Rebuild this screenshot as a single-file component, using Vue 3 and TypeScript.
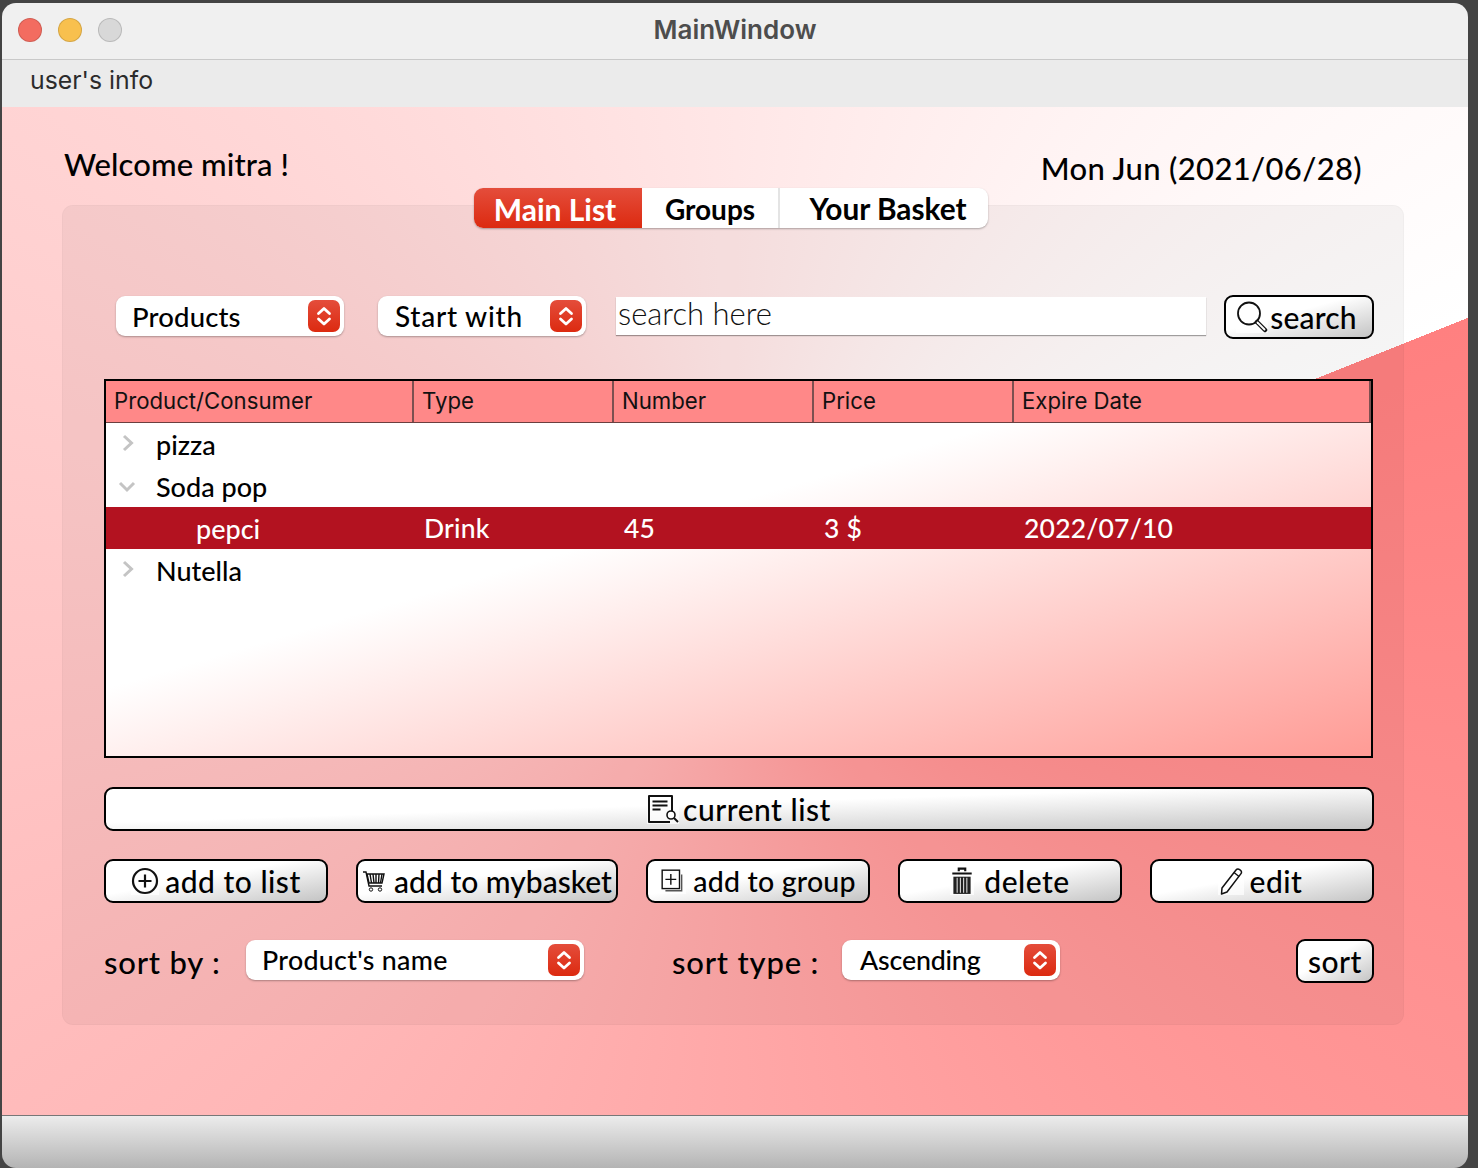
<script setup lang="ts">
interface Column { label: string }
interface TreeRow { name: string; level: number; arrow: '' | 'right' | 'down'; selected?: boolean; cells?: string[] }

const columns: Column[] = [
  { label: 'Product/Consumer' },
  { label: 'Type' },
  { label: 'Number' },
  { label: 'Price' },
  { label: 'Expire Date' },
]
const rows: TreeRow[] = [
  { name: 'pizza', level: 0, arrow: 'right' },
  { name: 'Soda pop', level: 0, arrow: 'down' },
  { name: 'pepci', level: 1, arrow: '', selected: true, cells: ['Drink', '45', '3 $', '2022/07/10'] },
  { name: 'Nutella', level: 0, arrow: 'right' },
]
const tabs = ['Main List', 'Groups', 'Your Basket']
const chevrons = 'M10.5 13.5 16 8.5l5.5 5M10.5 19 16 24l5.5-5'
</script>

<template>
  <div class="window">
    <header class="titlebar">
      <div class="lights">
        <span class="light red"></span>
        <span class="light yellow"></span>
        <span class="light gray"></span>
      </div>
      <span class="title">MainWindow</span>
    </header>
    <nav class="menubar">user's info</nav>

    <main class="central">
      <div class="top">
        <span class="welcome">Welcome mitra !</span>
        <span class="date">Mon Jun (2021/06/28)</span>
      </div>

      <div class="tabs">
        <span v-for="(tab, i) in tabs" :key="tab" class="tab" :class="['tab' + i, { active: i === 0 }]">{{ tab }}</span>
      </div>

      <section class="pane">
        <div class="filter-row">
          <div class="combo w-products">
            <span class="combo-text products-text">Products</span>
            <span class="stepper"><svg viewBox="0 0 32 32" width="32" height="32"><path :d="chevrons" class="chev" /></svg></span>
          </div>
          <div class="combo w-start">
            <span class="combo-text start-text">Start with</span>
            <span class="stepper"><svg viewBox="0 0 32 32" width="32" height="32"><path :d="chevrons" class="chev" /></svg></span>
          </div>
          <input class="search-input" placeholder="search here" />
          <button class="btn search-btn">
            <svg class="ico" viewBox="0 0 32 32" width="32" height="32"><circle cx="13" cy="12.5" r="11" fill="none" stroke="#111" stroke-width="1.8" /><path d="M21 21l8 8" stroke="#111" stroke-width="4.5" stroke-linecap="round" /><path d="M21.5 21.5l7 7" stroke="#fff" stroke-width="1.8" stroke-linecap="round" /></svg>
            <span>search</span>
          </button>
        </div>

        <div class="table">
          <div class="thead">
            <div v-for="c in columns" :key="c.label" class="th">{{ c.label }}</div>
          </div>
          <div v-for="r in rows" :key="r.name" class="tr" :class="{ selected: r.selected }">
            <div class="td first" :class="{ child: r.level === 1 }">
              <svg v-if="r.arrow === 'right'" class="arrow" viewBox="0 0 16 18" width="16" height="18"><path d="M4 2l7.5 7L4 16" fill="none" stroke="#c4c4c4" stroke-width="3" /></svg>
              <svg v-if="r.arrow === 'down'" class="arrow down" viewBox="0 0 18 12" width="18" height="12"><path d="M2 2l7 7 7-7" fill="none" stroke="#c4c4c4" stroke-width="3" /></svg>
              <span>{{ r.name }}</span>
            </div>
            <template v-if="r.cells">
              <div v-for="cell in r.cells" :key="cell" class="td">{{ cell }}</div>
            </template>
          </div>
        </div>

        <button class="btn current">
          <svg class="ico" viewBox="0 0 32 30" width="32" height="30"><path d="M25 20V2H2v26h21" fill="none" stroke="#111" stroke-width="2" stroke-linejoin="round" /><path d="M5.5 7.5h15M5.5 11.5h15M5.5 15.5h8" stroke="#111" stroke-width="2" /><circle cx="24" cy="21" r="4" fill="#fff" stroke="#111" stroke-width="1.6" /><path d="M27 24l4 4" stroke="#111" stroke-width="2" /></svg>
          <span>current list</span>
        </button>

        <div class="action-row">
          <button class="btn act">
            <svg class="ico" viewBox="0 0 28 28" width="28" height="28"><circle cx="14" cy="14" r="12" fill="none" stroke="#111" stroke-width="2.2" /><path d="M14 7.5v13M7.5 14h13" stroke="#111" stroke-width="2.2" /></svg>
            <span>add to list</span>
          </button>
          <button class="btn act basket">
            <svg class="ico" viewBox="0 0 24 24" width="24" height="24"><path d="M1 3h3l3 14h13" fill="none" stroke="#111" stroke-width="1.4" /><path d="M5 5h17l-2 9H7z" fill="#fff" stroke="#111" stroke-width="1.4" /><path d="M8 5l1.5 9M11 5l1 9M14 5v9M17 5l-.5 9M20 5l-1.5 9" stroke="#111" stroke-width="1.4" /><circle cx="9" cy="20.5" r="1.7" fill="none" stroke="#111" /><circle cx="18" cy="20.5" r="1.7" fill="none" stroke="#111" /></svg>
            <span>add to mybasket</span>
          </button>
          <button class="btn act group">
            <svg class="ico" viewBox="0 0 24 24" width="26" height="26"><rect x="2" y="2" width="16" height="17" fill="#fff" stroke="#111" stroke-width="1.3" /><path d="M10 5.5v10M5 10.5h10" stroke="#111" stroke-width="1.3" /><path d="M20 6v15H5" fill="none" stroke="#555" stroke-width="1.3" /></svg>
            <span>add to group</span>
          </button>
          <button class="btn act del">
            <svg class="ico" viewBox="1 1 22 26" width="24" height="28"><path d="M3 7h18M9 5V2.5h6V5" fill="none" stroke="#111" stroke-width="2" /><path d="M4 10h16v16H4z" fill="#222" /><path d="M7.5 11v14M10.5 11v14M13.5 11v14M16.5 11v14" stroke="#ddd" stroke-width="1" /></svg>
            <span>delete</span>
          </button>
          <button class="btn act edit">
            <svg class="ico" viewBox="0 0 26 28" width="26" height="28"><path d="M4 21 18 3c1-1.2 2.500-1.200 4-.2s2 2.500 1 3.800L9 25l-5.500 2z" fill="#fff" stroke="#111" stroke-width="1.5" stroke-linejoin="round" /><path d="M16 5.500l5 4" stroke="#111" stroke-width="1.5" /></svg>
            <span>edit</span>
          </button>
        </div>

        <div class="sort-row">
          <span class="sort-label l1">sort by :</span>
          <div class="combo w-name">
            <span class="combo-text small">Product's name</span>
            <span class="stepper"><svg viewBox="0 0 32 32" width="32" height="32"><path :d="chevrons" class="chev" /></svg></span>
          </div>
          <span class="sort-label l2">sort type :</span>
          <div class="combo w-order">
            <span class="combo-text small asc">Ascending</span>
            <span class="stepper"><svg viewBox="0 0 32 32" width="32" height="32"><path :d="chevrons" class="chev" /></svg></span>
          </div>
          <button class="btn sort-btn">sort</button>
        </div>
      </section>
    </main>

    <footer class="statusbar"></footer>
  </div>
</template>

<style>
html, body { margin: 0; background: #444; }
</style>

<style scoped>
* { box-sizing: border-box; }
.window {
  width: 1466px;
  height: 1165px;
  margin: 3px 0 0 2px;
  border-radius: 14px;
  overflow: hidden;
  display: flex;
  flex-direction: column;
  font-family: "Lato", "Noto Sans", sans-serif;
  color: #000;
}
.titlebar {
  height: 57px;
  flex: none;
  background: #f0f0f0;
  border-bottom: 1px solid #c9c9c9;
  display: flex;
  align-items: center;
  justify-content: center;
  position: relative;
}
.lights { position: absolute; left: 16px; top: 15px; display: flex; gap: 16px; }
.light { width: 24px; height: 24px; border-radius: 50%; border: 1px solid rgba(0,0,0,.14); }
.red { background: #f36c60; }
.yellow { background: #f8c04e; }
.gray { background: #d8d8d8; }
.title { font-family: "Inter", "Roboto", sans-serif; font-weight: 600; font-size: 26px; color: #4d4d4d; margin-top: -3px; }
.menubar {
  height: 47px;
  flex: none;
  background: #ebebeb;
  padding: 3px 0 0 28px;
  font-family: "Inter", "Roboto", sans-serif;
  font-size: 24.8px;
  line-height: 34px;
  color: #2b2b2b;
}
.central {
  flex: none;
  height: 1008px;
  padding: 0 64px 0 60px;
  background: conic-gradient(from 68.2deg at 50% 50%, #ff8080, #ffffff);
}
.top {
  height: 81px;
  display: flex;
  justify-content: space-between;
  padding: 0 42px 0 2px;
}
.welcome { font-size: 31px; font-weight: 500; line-height: 40px; margin-top: 37px; letter-spacing: .1px; }
.date { font-size: 31px; font-weight: 500; line-height: 40px; margin-top: 41px; letter-spacing: .35px; }
.tabs {
  width: 514px;
  height: 40px;
  margin: 0 0 -23px 412px;
  position: relative;
  z-index: 1;
  display: flex;
  background: #fff;
  border-radius: 9px;
  box-shadow: 0 1px 2px rgba(0,0,0,.3);
  overflow: hidden;
}
.tab {
  display: flex;
  align-items: center;
  justify-content: center;
  font-size: 30px;
  font-weight: 700;
  padding-top: 1px;
}
.tab0 { width: 168px; padding-right: 6px; }
.tab1 { width: 138px; border-right: 2px solid #e4e4e4; font-size: 28px; }
.tab2 { width: 208px; padding-left: 8px; font-size: 29.8px; }
.active { color: #fff; background: linear-gradient(#e44d3b, #dc2a10); }
.pane {
  height: 820px;
  padding: 89px 29px 0 41px;
  background: rgba(0,0,0,.04);
  border: 1px solid rgba(0,0,0,.025);
  border-radius: 11px;
}
.filter-row { height: 44px; display: flex; align-items: center; padding-left: 12px; }
.combo {
  height: 40px;
  flex: none;
  margin-bottom: 2px;
  background: #fff;
  border-radius: 9px;
  box-shadow: 0 1px 2px rgba(0,0,0,.3);
  display: flex;
  align-items: center;
  justify-content: space-between;
  padding: 0 4px 0 16px;
}
.w-products { width: 228px; }
.w-start { width: 208px; margin-left: 34px; }
.w-name { width: 338px; }
.w-order { width: 218px; }
.combo-text { font-size: 28px; font-weight: 500; }
.products-text { font-size: 27.5px; letter-spacing: .15px; }
.start-text { margin-left: 1px; letter-spacing: .75px; }
.small { font-size: 26.8px; letter-spacing: .3px; }
.asc { letter-spacing: -.2px; margin-left: 2px; }
.stepper {
  width: 32px;
  height: 32px;
  border-radius: 7px;
  background: linear-gradient(#e44d3b, #dc2a10);
  display: block;
  flex: none;
}
.stepper svg { display: block; }
.chev { fill: none; stroke: #fff; stroke-width: 2.8; stroke-linecap: round; stroke-linejoin: round; }
.search-input {
  width: 590px;
  height: 38px;
  margin: 0 0 2px 30px;
  padding: 0 2px 6px;
  border: none;
  outline: none;
  background: #fff;
  box-shadow: 0 1px 1px rgba(0,0,0,.35);
  font-family: "Lato", sans-serif;
  font-weight: 300;
  font-size: 31px;
  color: #111;
}
.search-input::placeholder { color: #111; opacity: 1; }
.btn {
  height: 44px;
  padding: 0;
  border: 2px solid #000;
  border-radius: 9px;
  background: linear-gradient(to bottom right, #fff 42%, #c4c4c4 100%);
  display: flex;
  align-items: center;
  justify-content: center;
  font-family: "Lato", sans-serif;
  font-size: 30px;
  font-weight: 500;
  letter-spacing: .5px;
  color: #000;
  white-space: nowrap;
}
.ico { flex: none; display: block; background: rgba(255,255,255,.7); }
.search-btn { width: 150px; margin-left: 18px; gap: 2px; padding-right: 5px; }
.search-btn span { letter-spacing: .2px; }
.table {
  width: 1269px;
  height: 379px;
  margin-top: 40px;
  border: 2px solid #000;
  background: linear-gradient(to bottom right, #fff 41%, #ff9b95 100%);
}
.thead, .tr { display: grid; grid-template-columns: 308px 200px 200px 200px 357px; }
.thead { height: 42px; background: #ff8888; border-bottom: 1px solid #6b3f3f; }
.th {
  border-right: 2px solid #7c5050;
  padding-left: 8px;
  font-family: "Inter", "Roboto", sans-serif;
  font-size: 22.2px;
  line-height: 40px;
  color: #111;
}
.tr { height: 42px; font-size: 26.5px; font-weight: 500; align-items: center; }
.selected { background: #b31220; color: #fff; }
.td { padding-left: 10px; letter-spacing: .2px; }
.first { padding-left: 50px; position: relative; font-size: 27px; letter-spacing: 0; }
.child { padding-left: 90px; }
.arrow { position: absolute; left: 14px; top: 6px; }
.arrow.down { left: 12px; top: 11px; }
.current { width: 1270px; margin-top: 29px; gap: 4px; }
.action-row { margin-top: 28px; display: flex; gap: 28px; }
.act { width: 224px; gap: 6px; }
.basket { width: 262px; gap: 8px; letter-spacing: 0; }
.group { gap: 7px; font-size: 28.5px; letter-spacing: .2px; }
.del { gap: 10px; }
.edit { padding-right: 4px; }
.sort-row { margin-top: 36px; height: 44px; display: flex; align-items: center; }
.sort-label { font-size: 31px; font-weight: 500; letter-spacing: .8px; white-space: nowrap; margin-top: 2px; }
.l1 { width: 142px; }
.l2 { width: 170px; margin-left: 88px; }
.sort-btn { width: 78px; margin-left: auto; }
.statusbar {
  flex: 1;
  border-top: 1px solid #777;
  background: linear-gradient(#ececec, #b4b4b4);
}
</style>
